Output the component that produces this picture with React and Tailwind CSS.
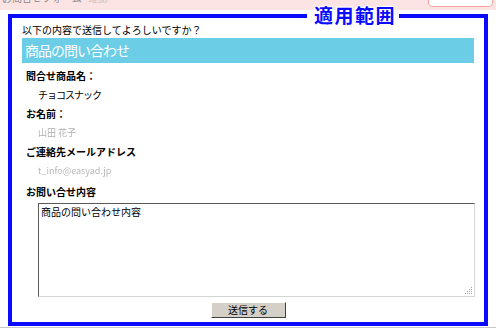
export default function App() {
  const jp = { fontFamily: '"Noto Sans CJK JP", "Noto Sans", sans-serif' };
  return (
    <div className="relative w-[496px] h-[333px] bg-white overflow-hidden text-black font-['Noto_Sans_CJK_JP',sans-serif]">
      {/* top pink strip */}
      <div className="relative h-[10px] bg-[#fde4e4] overflow-hidden">
        <div className="-mt-[8px] pl-[2px] text-[10px] leading-[12px] text-[#8a8a8a] whitespace-nowrap">
          <span>お問合せフォーム</span>
          <span className="ml-[6px] text-[#d0c4c4]">確認</span>
          <span className="ml-[2px]">…</span>
        </div>
        <div className="absolute left-[428px] top-[-10px] w-[65px] h-[17px] rounded-[4px] border border-[#f5a3a3] bg-white" />
      </div>

      {/* frame */}
      <div className="relative ml-[8px] mt-[4px] w-[480px] h-[312px] border-4 border-[#0a0aff]">
        {/* gap in top border */}
        <div className="absolute left-[295px] top-[-4px] w-[92px] h-[4px] bg-white" />
        <div className="absolute left-[302px] top-[-14px] h-[22px] leading-[22px] text-[19px] font-bold text-[#0a0aff] tracking-[1.5px] whitespace-nowrap [text-shadow:0_0_2px_#fff,1px_1px_0_#fff,-1px_-1px_0_#fff,1px_-1px_0_#fff,-1px_1px_0_#fff]">
          適用範囲
        </div>

        <div className="px-[10px]">
          <div className="mt-[5px] h-[14px] leading-[14px] text-[10px] whitespace-nowrap">
            以下の内容で送信してよろしいですか？
          </div>
          <div className="mt-[1px] h-[25px] bg-[#6ccde6] pl-[3px] text-[14px] leading-[25px] tracking-[-1px] text-white">
            商品の問い合わせ
          </div>

          <div className="mt-[3px] pl-[4px] h-[19px] leading-[19px] text-[10px] font-bold">問合せ商品名：</div>
          <div className="pl-[16px] h-[19px] leading-[19px] text-[10px] tracking-[-1px]">チョコスナック</div>
          <div className="pl-[4px] h-[19px] leading-[19px] text-[10px] font-bold">お名前：</div>
          <div className="pl-[16px] h-[19px] leading-[19px] text-[9px] text-[#b0b0b0] blur-[0.6px]">山田 花子</div>
          <div className="pl-[4px] h-[19px] leading-[19px] text-[10px] font-bold">ご連絡先メールアドレス</div>
          <div className="pl-[16px] h-[19px] leading-[19px] text-[9px] text-[#b8b8b8] blur-[0.6px]">t_info@easyad.jp</div>
          <div className="mt-[2px] pl-[4px] h-[19px] leading-[19px] text-[10px] font-bold">お問い合せ内容</div>

          <div className="relative mt-[2px] ml-[16px] w-[437px] h-[94px]">
            <textarea
              readOnly
              defaultValue="商品の問い合わせ内容"
              style={jp}
              className="block w-full h-full resize-none bg-white border border-t-[#5a5a5a] border-l-[#5a5a5a] border-r-[#d4d4d4] border-b-[#d4d4d4] px-[2px] py-[1px] text-[10px] leading-[14px] text-black outline-none"
            />
            <svg className="absolute right-[2px] bottom-[2px]" width="8" height="8" viewBox="0 0 8 8">
              <g fill="#a0a0a0">
                <rect x="6" y="0" width="1" height="1" />
                <rect x="4" y="2" width="1" height="1" />
                <rect x="6" y="2" width="1" height="1" />
                <rect x="2" y="4" width="1" height="1" />
                <rect x="4" y="4" width="1" height="1" />
                <rect x="6" y="4" width="1" height="1" />
                <rect x="0" y="6" width="1" height="1" />
                <rect x="2" y="6" width="1" height="1" />
                <rect x="4" y="6" width="1" height="1" />
                <rect x="6" y="6" width="1" height="1" />
              </g>
            </svg>
          </div>

          <div className="mt-[5px] flex justify-center">
            <button
              style={jp}
              className="w-[75px] h-[16px] bg-[#d4d0c8] border border-t-white border-l-white border-r-[#404040] border-b-[#404040] text-[10px] leading-[14px] text-black"
            >
              送信する
            </button>
          </div>
        </div>
      </div>

      <div className="mt-[1px] h-px bg-[#c8c8c8]" />
    </div>
  );
}
